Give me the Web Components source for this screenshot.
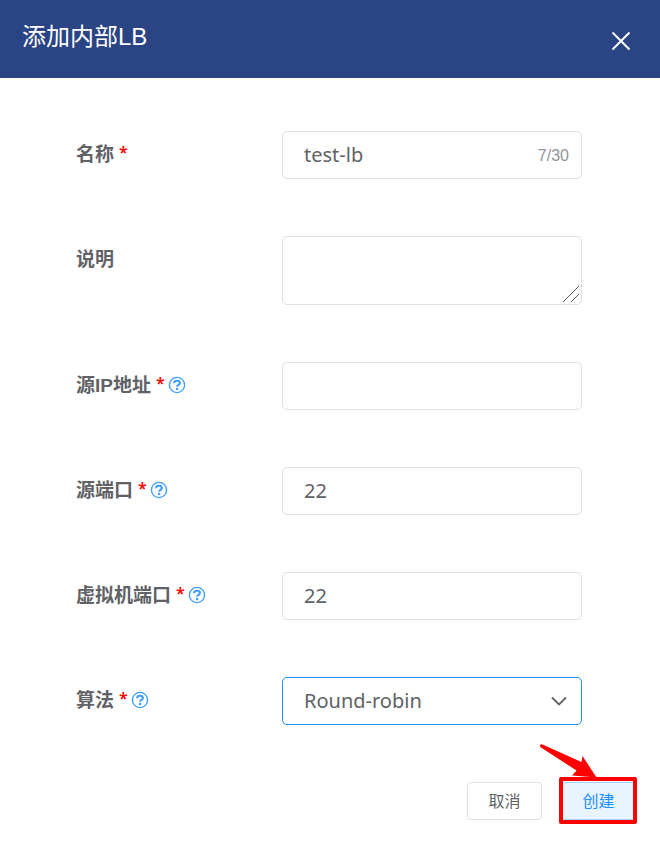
<!DOCTYPE html>
<html lang="zh-CN">
<head>
<meta charset="utf-8">
<meta name="viewport" content="width=device-width, initial-scale=1">
<title>添加内部LB</title>
<style>
  body {
    margin: 0;
    background: #fff;
    color: #606266;
    font-family: "Liberation Sans", "Noto Sans CJK SC", sans-serif;
  }
</style>
</head>
<body>
<lb-dialog>
  <span slot="title">添加内部LB</span>
  <lb-field value="test-lb" maxlength="30" required>名称</lb-field>
  <lb-field kind="textarea">说明</lb-field>
  <lb-field required help="源IP地址说明">源IP地址</lb-field>
  <lb-field value="22" required help="源端口说明">源端口</lb-field>
  <lb-field value="22" required help="虚拟机端口说明">虚拟机端口</lb-field>
  <lb-field kind="select" options="Round-robin,Least-conn,Source" required help="算法说明">算法</lb-field>
  <lb-button slot="actions">取消</lb-button>
  <lb-callout slot="actions"><lb-button primary>创建</lb-button></lb-callout>
</lb-dialog>

<script>
class LbDialog extends HTMLElement {
  constructor() {
    super();
    this.attachShadow({ mode: 'open' }).innerHTML = `
      <style>
        :host { display: block; }
        header {
          display: flex;
          justify-content: space-between;
          align-items: center;
          box-sizing: border-box;
          min-height: 78px;
          padding: 0 26px 0 22px;
          background: #2a4484;
          color: #fff;
        }
        h1 { margin: 0; padding-bottom: 4px; font-size: 24px; line-height: 36px; font-weight: 400; }
        .close {
          display: flex;
          padding: 0;
          margin-top: 4px;
          border: 0;
          background: none;
          color: inherit;
          cursor: pointer;
        }
        form { margin: 0; }
        .fields { display: flex; flex-direction: column; gap: 57px; padding: 53px 78px 57px 76px; }
        footer { display: flex; justify-content: flex-end; gap: 19px; padding: 0 24px 22px; }
      </style>
      <header>
        <h1><slot name="title"></slot></h1>
        <button class="close" type="button" aria-label="关闭">
          <svg width="26" height="26" viewBox="0 0 26 26" fill="none" stroke="currentColor" stroke-width="2"><path d="M4.5 4.5 21.5 21.5M21.5 4.5 4.5 21.5"/></svg>
        </button>
      </header>
      <form>
        <div class="fields"><slot></slot></div>
        <footer><slot name="actions"></slot></footer>
      </form>`;
  }
}

class LbField extends HTMLElement {
  constructor() {
    super();
    this.attachShadow({ mode: 'open', delegatesFocus: true });
  }

  connectedCallback() {
    const kind = this.getAttribute('kind') || 'input';
    const value = this.getAttribute('value') || '';
    const max = this.getAttribute('maxlength');
    const help = this.getAttribute('help');
    const required = this.hasAttribute('required');
    const need = required ? 'required' : '';

    const controls = {
      input: `<input id="control" type="text" value="${value}" ${need} ${max ? `maxlength="${max}"` : ''}>
              ${max ? `<span class="count">${value.length}/${max}</span>` : ''}`,
      textarea: `<textarea id="control"></textarea>
              <svg class="over grip" width="16" height="16" viewBox="0 0 16 16" stroke="#55585c" fill="none"><path d="M0 16 16 0M8 16 16 8"/></svg>`,
      select: `<select id="control" ${need}>${(this.getAttribute('options') || '').split(',').map(o => `<option>${o}</option>`).join('')}</select>
              <svg class="over chevron" width="16" height="16" viewBox="0 0 16 16" stroke="#606266" stroke-width="1.8" fill="none"><path d="M1 4.500 8 11.500 15 4.500"/></svg>`
    };

    this.shadowRoot.innerHTML = `
      <style>
        :host { display: grid; grid-template-columns: 206px minmax(0, 1fr); align-items: start; }
        .caption { display: flex; align-items: center; height: 46px; }
        label { padding-top: 2px; font-size: 19px; line-height: 28px; font-weight: 700; white-space: nowrap; }
        .star { margin-left: 5px; color: #f00; font: 600 16px/20px "Noto Sans", sans-serif; vertical-align: 3px; }
        .help { display: flex; margin-left: 3px; padding: 0; border: 0; background: none; color: #409eff; cursor: help; }
        .box {
          position: relative;
          display: flex;
          align-items: center;
          box-sizing: border-box;
          min-height: 48px;
          border: 1px solid #dcdfe6;
          border-radius: 5px;
          background: #fff;
        }
        .box.select { border-color: #1f8fff; }
        input, textarea, select {
          flex: 1;
          min-width: 0;
          box-sizing: border-box;
          margin: 0;
          padding: 0 21px;
          border: 0;
          outline: 0;
          background: none;
          color: inherit;
          font: 20px/28px "Noto Sans", "Noto Sans CJK SC", sans-serif;
        }
        input, select { height: 46px; }
        input { padding-bottom: 2px; }
        select { appearance: none; cursor: pointer; }
        textarea { height: 67px; padding-block: 8px; resize: vertical; }
        textarea::-webkit-resizer { display: none; }
        .count { padding: 2px 12px 0 0; color: #909399; font-size: 16px; line-height: 24px; }
        .over { position: absolute; pointer-events: none; }
        .grip { right: 2px; bottom: 2px; }
        .chevron { right: 14px; top: 15px; }
      </style>
      <div class="caption">
        <label for="control"><slot></slot>${required ? '<span class="star">*</span>' : ''}</label>
        ${help ? `<button class="help" type="button" aria-label="${help}">
          <svg width="18" height="18" viewBox="0 0 18 18" fill="none" stroke="currentColor">
            <circle cx="9" cy="9" r="7.6" stroke-width="1.4"/>
            <path d="M6.1 7.200C6.200 5.500 7.300 4.800 9 4.800s2.900.8 2.900 2.300c0 1.800-2.800 1.700-2.800 3.700" stroke-width="2.1"/>
            <path d="M9.1 11.900v2.200" stroke-width="2.300"/>
          </svg></button>` : ''}
      </div>
      <div class="box ${kind}">${controls[kind]}</div>`;

    const count = this.shadowRoot.querySelector('.count');
    if (count) {
      const input = this.shadowRoot.querySelector('input');
      input.addEventListener('input', () => { count.textContent = `${input.value.length}/${max}`; });
    }
  }
}

class LbButton extends HTMLElement {
  constructor() {
    super();
    this.attachShadow({ mode: 'open', delegatesFocus: true }).innerHTML = `
      <style>
        :host { display: block; }
        button {
          display: block;
          box-sizing: border-box;
          min-width: 75px;
          min-height: 38px;
          padding: 2px 20px 0;
          border: 1px solid #dcdfe6;
          border-radius: 4px;
          background: #fff;
          color: #606266;
          font: 16px/24px "Liberation Sans", "Noto Sans CJK SC", sans-serif;
          cursor: pointer;
        }
        :host([primary]) button { border-color: #a6d2ff; background: #e8f4ff; color: #1f8fff; }
      </style>
      <button type="button"><slot></slot></button>`;
  }
}

/* Red frame and arrow laid over the slotted control. */
class LbCallout extends HTMLElement {
  constructor() {
    super();
    this.attachShadow({ mode: 'open' }).innerHTML = `
      <style>
        :host { display: block; position: relative; }
        .frame { position: absolute; inset: -5px -1px -4px -2px; border: 4px solid #f00; border-radius: 2px; pointer-events: none; }
        svg { position: absolute; left: -22px; top: -39px; pointer-events: none; }
      </style>
      <slot></slot>
      <div class="frame"></div>
      <svg width="60" height="36" viewBox="0 0 60 36" fill="#f00"><path d="M1 3Q1 .5 3.500 1.500L42.500 19 43.500 13 57.500 34.500 33 32.500 37.500 27.500 2 4.500Q1 4 1 3Z"/></svg>`;
  }
}

customElements.define('lb-dialog', LbDialog);
customElements.define('lb-field', LbField);
customElements.define('lb-button', LbButton);
customElements.define('lb-callout', LbCallout);
</script>
</body>
</html>
